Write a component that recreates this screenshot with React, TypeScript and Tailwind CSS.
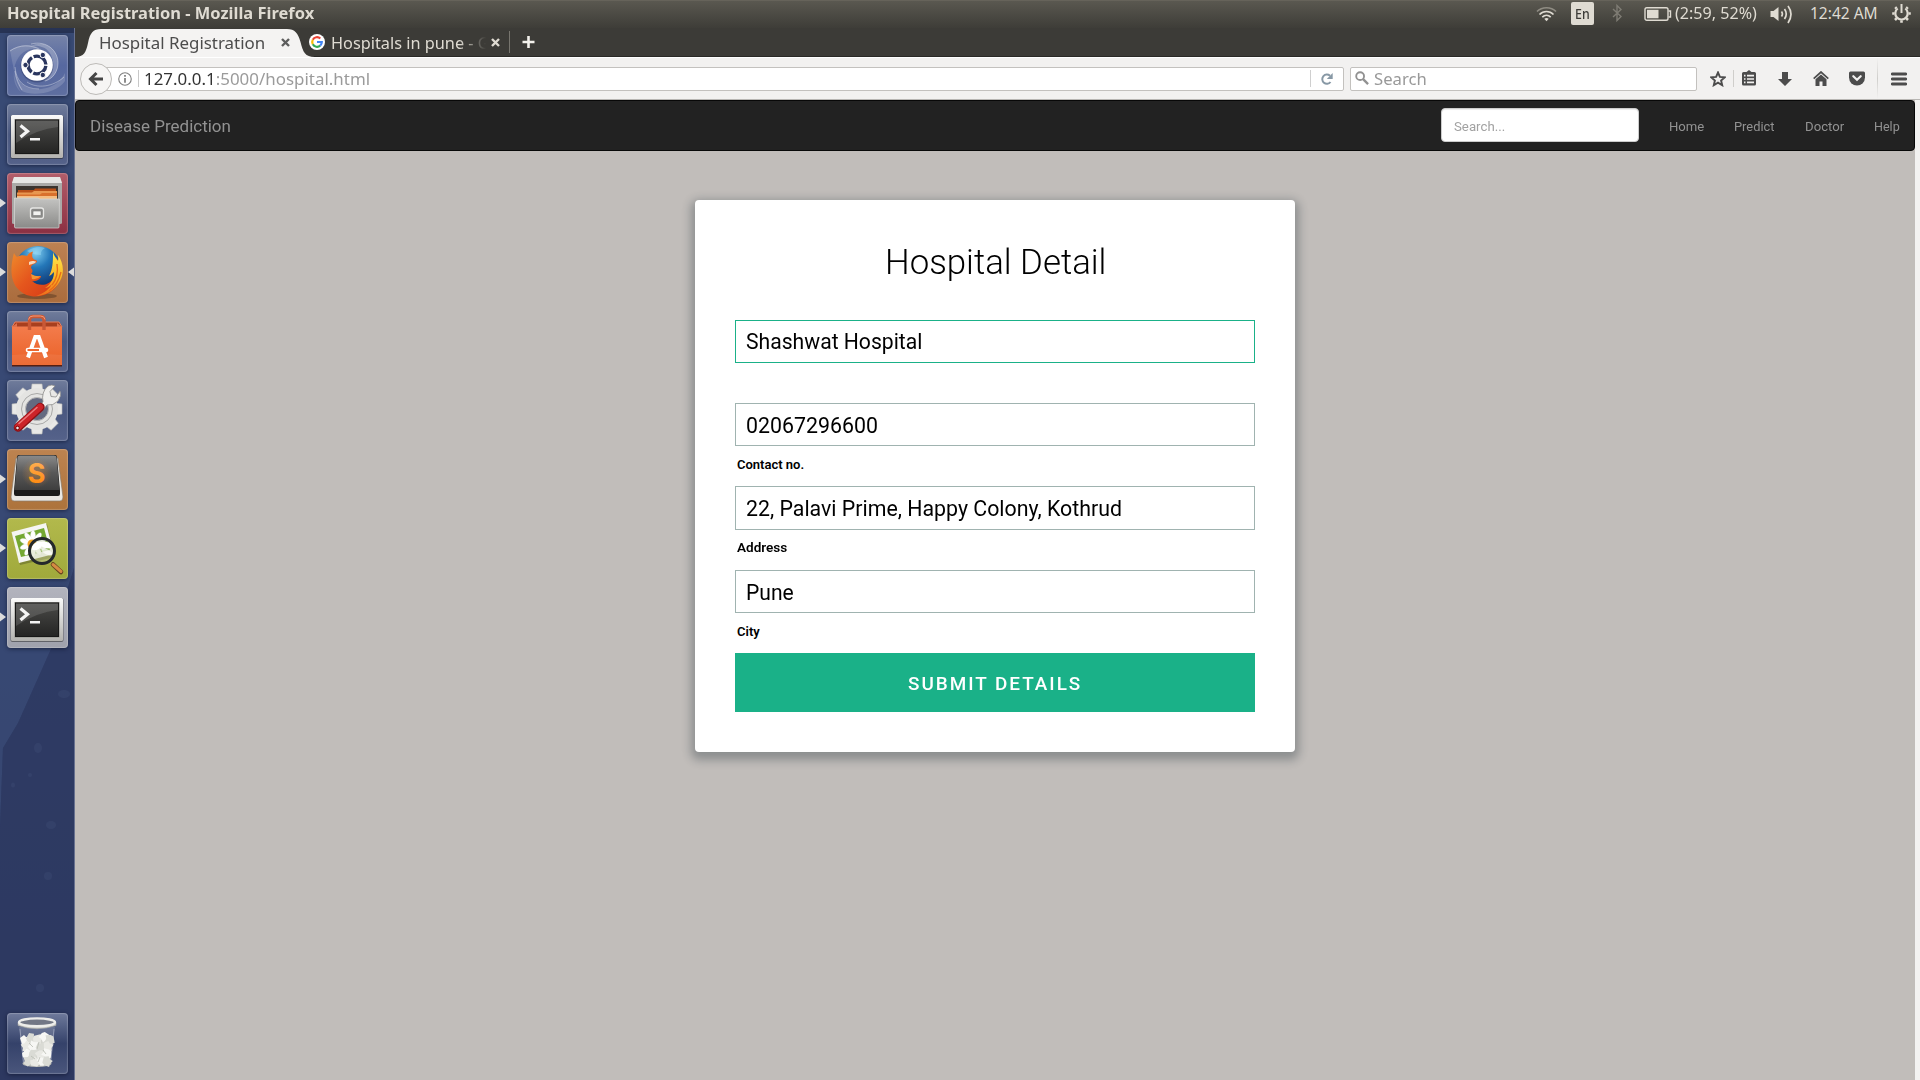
import { useLayoutEffect, useRef, useState, type ReactNode } from "react";

const UI = "font-['Noto_Sans','Open_Sans',sans-serif]";
const WEB = "font-['Roboto','Noto_Sans',sans-serif]";

/** A single line of text stretched or condensed to a known width. */
function Fit({ w, className = "", children }: { w: number; className?: string; children: ReactNode }) {
  const ref = useRef<HTMLSpanElement>(null);
  const [scale, setScale] = useState(1);
  useLayoutEffect(() => {
    if (ref.current) setScale(w / ref.current.offsetWidth);
  }, [w]);
  return (
    <span className={`block shrink-0 whitespace-pre ${className}`} style={{ width: w }}>
      <span ref={ref} className="inline-block origin-left" style={{ transform: `scaleX(${scale})` }}>
        {children}
      </span>
    </span>
  );
}

/* ---------- Top panel ---------- */

function TopPanel() {
  return (
    <header
      className={`flex h-7 shrink-0 items-center border-t border-[#66635a] bg-linear-to-b from-[#5a5850] to-[#3e3d38] pr-2 pb-[3px] pl-[7px] text-[#dfdbd2] ${UI}`}
    >
      <Fit w={307} className="text-[15.500px] leading-6 font-bold">Hospital Registration - Mozilla Firefox</Fit>
      <div className="flex-1" />
      <svg className="mt-0.5 h-[18px] w-[21px]" viewBox="0 0 21 18" fill="none" stroke="#dfdbd2" strokeWidth="1.7">
        <path d="M1 6.5C6 1.5 15 1.5 20 6.5" stroke="#8f8c83" />
        <path d="M3.5 9.5C7.5 5.5 13.500 5.500 17.500 9.500" />
        <path d="M6.300 12.200C8.700 9.900 12.300 9.900 14.700 12.200" />
        <path d="M8.300 13.800Q10.500 12.200 12.700 13.800L10.500 16.200Z" fill="#dfdbd2" stroke="none" />
      </svg>
      <div className="mt-px ml-3.5 flex h-[23px] w-[23px] items-center justify-center rounded-[2px] bg-[#dfdbd2] text-[#3c3b37]">
        <Fit w={15} className="text-[14px] leading-[22px] font-medium">En</Fit>
      </div>
      <svg className="ml-[18px] h-[18px] w-2.5" viewBox="0 0 10 18" fill="none" stroke="#7f7c74" strokeWidth="1.4">
        <path d="M1 5L9 12.500L5 16.500V1.500L9 5.500L1 13" />
      </svg>
      <svg className="mt-px ml-[22px] h-4 w-7" viewBox="0 0 28 16" fill="none" stroke="#dfdbd2" strokeWidth="1.4">
        <rect x="1" y="1.700" width="23" height="12.600" rx="1.800" />
        <path d="M24.500 5H26.500V11H24.500" />
        <rect x="3" y="3.800" width="11.500" height="8.500" fill="#dfdbd2" stroke="none" />
      </svg>
      <Fit w={82} className="ml-[3px] text-[15.500px] leading-6">(2:59, 52%)</Fit>
      <svg className="mt-0.5 ml-[13px] h-5 w-6" viewBox="0 0 24 20" fill="none" stroke="#dfdbd2" strokeWidth="1.700">
        <path d="M0.500 7H3.500L8.500 3V17L3.500 13H0.500Z" fill="#dfdbd2" stroke="none" />
        <path d="M11.500 7.500Q13.300 10 11.500 12.500M14.500 5Q18 10 14.500 15M18 2Q24 10 18 19" />
      </svg>
      <Fit w={68} className="ml-4 text-[15.500px] leading-6">12:42 AM</Fit>
      <svg className="mt-px ml-[13px] h-[21px] w-[21px]" viewBox="0 0 21 21" fill="none" stroke="#dfdbd2">
        <path d="M14.300 5.500A6.200 6.200 0 1 1 6.700 5.500" strokeWidth="2.200" />
        <path d="M10.500 1V10" strokeWidth="2" />
        <path
          d="M4.200 4.200L5.500 5.500M16.800 4.200L15.500 5.500M1.200 10.500H3.500M17.500 10.500H19.800M4 17L5.800 15.200M17 17L15.200 15.200M10.500 17.500V19.800"
          strokeWidth="2.600"
        />
      </svg>
    </header>
  );
}

/* ---------- Launcher ---------- */

function TileSvg({ children }: { children: ReactNode }) {
  return (
    <svg className="block h-[61px] w-[61px]" viewBox="0 0 61 61" fill="none">
      {children}
    </svg>
  );
}

function DashIcon() {
  return (
    <TileSvg>
      <path d="M3 15C14 8 26 9 34 14C22 12 12 17 8 30C6 38 8 48 14 57C8 52 6 44 7 36Z" fill="#fff" opacity=".14" />
      <path d="M8 32C8 46 18 56 34 54C46 53 54 46 58 38L58 46C50 58 26 62 15 56C9 49 7 41 8 32Z" fill="#fff" opacity=".16" />
      <path d="M24 11C38 4 50 14 51 26C52 38 44 46 36 46C46 40 48 30 44 20C40 12 32 10 24 11Z" fill="#fff" opacity=".25" />
      <path d="M3 16C13 9 24 10 32 14M8 32C9 46 17 54 32 54M24 9C40 5 51 16 51 28C51 36 46 44 38 46M15 55C12 50 9 44 8 36M20 47C30 54 46 52 57 42" stroke="#fff" opacity=".35" />
      <circle cx="30" cy="31" r="16.500" fill="#26325c" opacity=".4" />
      <circle cx="30" cy="30" r="15.800" fill="#fff" />
      <circle cx="30" cy="30" r="8.900" stroke="#2a365f" strokeWidth="3.400" strokeDasharray="16.800 1.840" strokeDashoffset="17.700" />
      <g fill="#2a365f" stroke="#fff" strokeWidth="1">
        <circle cx="18.500" cy="30" r="2.700" />
        <circle cx="35.800" cy="20" r="2.700" />
        <circle cx="35.800" cy="40" r="2.700" />
      </g>
    </TileSvg>
  );
}

function TerminalIcon() {
  return (
    <TileSvg>
      <defs>
        <linearGradient id="tf" x1="0" y1="0" x2="0" y2="1">
          <stop stopColor="#fafafa" /><stop offset="1" stopColor="#b3b2af" />
        </linearGradient>
        <linearGradient id="ts" x1="0" y1="0" x2="0" y2="1">
          <stop stopColor="#4a4a48" /><stop offset="1" stopColor="#242423" />
        </linearGradient>
      </defs>
      <rect x="3.500" y="11" width="53" height="44" rx="2" fill="#222" opacity=".5" />
      <rect x="4" y="11" width="52" height="43" rx="1.500" fill="url(#tf)" />
      <rect x="7.500" y="15" width="45" height="35.500" fill="#92918c" />
      <rect x="8.500" y="16" width="43" height="33.500" fill="url(#ts)" stroke="#171717" />
      <path d="M9 16.500H51V23Q30 25 9 39Z" fill="#fff" opacity=".13" />
      <path d="M13.500 21.500L20.500 27.200L13.500 33" stroke="#f4f4f4" strokeWidth="3.200" />
      <path d="M23 35.200H33" stroke="#f4f4f4" strokeWidth="2.600" />
    </TileSvg>
  );
}

function FilesIcon() {
  return (
    <TileSvg>
      <defs>
        <linearGradient id="ff" x1="0" y1="0" x2="0" y2="1">
          <stop stopColor="#c4c4c2" /><stop offset="1" stopColor="#8a8a88" />
        </linearGradient>
      </defs>
      <path d="M7 4H53L55 10V50Q55 51 53 51H7Q5 51 5 50V10Z" fill="#aaa9a7" />
      <path d="M7 4H53L55 10H5Z" fill="#e6e6e4" />
      <rect x="9" y="13" width="42" height="14" fill="#3a342f" />
      <path d="M11 17H27L28 15.500H49V27H11Z" fill="#b84f18" />
      <path d="M10 19.500H25L27 18H50V27H10Z" fill="#e89750" />
      <path d="M10 21.500H33L35 20H50V27H10Z" fill="#d9702c" />
      <path d="M10 23H50V27H10Z" fill="#f5bd82" />
      <path d="M7.500 25H31L33 26H52.500L52 54Q52 55 51 55H9Q7.500 55 7.500 54Z" fill="url(#ff)" stroke="#d9d9d7" strokeWidth=".7" />
      <rect x="23.500" y="35" width="13" height="10.500" rx="2.200" fill="#8b8b89" stroke="#e6e6e4" strokeWidth="1.300" />
      <rect x="26" y="38" width="8" height="4.500" rx=".8" fill="#f2f2f0" stroke="#777" strokeWidth=".6" />
    </TileSvg>
  );
}

function FirefoxIcon() {
  return (
    <TileSvg>
      <defs>
        <radialGradient id="fg" cx=".45" cy=".15" r=".8">
          <stop stopColor="#7fcdf0" /><stop offset=".4" stopColor="#2477b8" /><stop offset="1" stopColor="#0c2b66" />
        </radialGradient>
        <linearGradient id="fx" x1="0" y1="0" x2="1" y2=".8">
          <stop stopColor="#ef8b2c" /><stop offset=".5" stopColor="#e5561d" /><stop offset="1" stopColor="#d63a16" />
        </linearGradient>
        <linearGradient id="fy" x1="0" y1="0" x2="0" y2="1">
          <stop stopColor="#ffe94f" /><stop offset=".6" stopColor="#fbb321" /><stop offset="1" stopColor="#ec6a1c" />
        </linearGradient>
      </defs>
      <ellipse cx="30" cy="54" rx="20" ry="3" fill="#000" opacity=".25" />
      <circle cx="31" cy="27" r="23" fill="url(#fg)" />
      <path d="M20 9Q30 3 38 6Q33 9 34 13Q26 13 20 9Z" fill="#a8e1f7" opacity=".4" />
      <path
        d="M7 11C8 13 9 14 10 15C13 13 17 13 20 14C22 11 24 10 26 9.500C24.500 13 25 16 27 17.500C30 18 31 19 29 21C27 22 24 23 24 26C26 28 26 30 24 32C27 35 31 34 34 34C34 37 29 40 25 39C33 46 45 43 48 33C50 27 51 21 49 15C54 23 57 35 49 45C40 56 22 58 12 48C3 40 3 25 7 11Z"
        fill="url(#fx)"
      />
      <path
        d="M46 10C47 14 49 16 51 19C51.500 16 51 14 51 13C56 20 58 30 53 39C48 49 37 54 29 54C38 51 43 46 45 42C42 45 40 46 38 46C44 42 47 36 47 30C45 32 44 33 42 34C46 27 46 18 46 10Z"
        fill="url(#fy)"
      />
      <path d="M50 22Q52 34 45 43M54 30Q51 43 42 49" stroke="#e76c19" strokeWidth="1.300" />
      <path d="M22 23C26 22 29 21 29 19.500C27 18.500 24 19 22 20Z" fill="#f6d9be" />
      <path d="M24 32Q29 35 34 34Q30 38 25 37" fill="#f29534" />
    </TileSvg>
  );
}

function SoftwareIcon() {
  return (
    <TileSvg>
      <defs>
        <linearGradient id="sg" x1="0" y1="0" x2="0" y2="1">
          <stop stopColor="#f37b4b" /><stop offset="1" stopColor="#ea6127" />
        </linearGradient>
      </defs>
      <path d="M8 11H52L55 16H5Z" fill="#a83f1e" stroke="#e97f5b" />
      <path d="M5 16L10 12V16ZM55 16L50 12V16Z" fill="#e0714b" />
      <rect x="5" y="53" width="50" height="2.500" fill="#541f13" />
      <path d="M5 16H55V54H5Z" fill="url(#sg)" />
      <path d="M22.500 19V9Q22.500 5.500 26 5.500H33.500Q37 5.500 37 9V19" stroke="#c95835" strokeWidth="3.400" />
      <path d="M21.500 8.500Q22 5 26 5H33.500Q37.500 5 38 8.500" stroke="#f19a7b" />
      <path d="M21 46.500L28.300 26H31.700L39 46.500" stroke="#fff" strokeWidth="4" />
      <path d="M21 39H39" stroke="#fff" strokeWidth="4.600" strokeLinecap="round" />
      <path d="M20.500 39H32" stroke="#ec6831" strokeWidth="2" />
      <path d="M5 54V44Q30 42 55 44V54Z" fill="#fff" opacity=".07" />
    </TileSvg>
  );
}

function SettingsIcon() {
  const teeth = [0, 45, 90, 135, 180, 225, 270, 315];
  return (
    <TileSvg>
      <g stroke="#b8b8b6" strokeWidth=".6">
        {teeth.map((a) => (
          <path key={a} d="M24 12L25 4H35L36 12Z" fill="#e9e9e7" transform={`rotate(${a} 30 29)`} />
        ))}
      </g>
      <circle cx="30" cy="29" r="16" stroke="#e4e4e2" strokeWidth="10" />
      <circle cx="30" cy="29" r="15.500" stroke="#a2a2a0" strokeWidth=".9" />
      <circle cx="30" cy="29" r="11.500" fill="#646a80" stroke="#b9b9b7" />
      <path
        d="M36 22Q34 12 41 6Q45 4 48 6L43 11.500L44 16.500L49 17L53 11Q55 15 51 21Q46 26 40 25L36 30L31 26Z"
        fill="#efefed" stroke="#8d8d8b" strokeWidth=".8"
      />
      <path d="M33.500 27L11 47.500" stroke="#8d1116" strokeWidth="8.500" strokeLinecap="round" />
      <path d="M33 27L11 47" stroke="#cc2329" strokeWidth="6.500" strokeLinecap="round" />
      <path d="M30 27.500L12 43.500" stroke="#ec7a7c" strokeWidth="1.500" strokeLinecap="round" />
      <circle cx="10.500" cy="48" r="1.800" fill="#eee" stroke="#700" />
    </TileSvg>
  );
}

function SublimeIcon() {
  return (
    <TileSvg>
      <defs>
        <linearGradient id="sk" x1="0" y1="0" x2="0" y2="1">
          <stop stopColor="#8a8a8a" /><stop offset=".5" stopColor="#585858" /><stop offset="1" stopColor="#3e3e3e" />
        </linearGradient>
        <linearGradient id="so" x1="0" y1="0" x2="0" y2="1">
          <stop stopColor="#ffb862" /><stop offset="1" stopColor="#ff8000" />
        </linearGradient>
        <radialGradient id="sh">
          <stop stopColor="#e8923c" stopOpacity=".45" /><stop offset="1" stopColor="#e8923c" stopOpacity="0" />
        </radialGradient>
      </defs>
      <path d="M9 9H51L56 48Q56 52 53 52H7Q4 52 4 48Z" fill="#e9e7e3" stroke="#8a7b6a" strokeWidth=".7" />
      <path d="M10 8Q10 6 12 6H48Q50 6 50 8L53 42V45Q53 47 51 47H9Q7 47 7 45V42Z" fill="#1c1c1c" />
      <path d="M10.500 8Q11 6.500 13 6.500H47Q49.500 6.500 49.500 8L52.500 41H7.500Z" fill="url(#sk)" />
      <circle cx="29.500" cy="24" r="15" fill="url(#sh)" />
      <text x="29.500" y="33.500" textAnchor="middle" fontFamily="Inter, sans-serif" fontWeight="700" fontSize="27" fill="url(#so)">S</text>
    </TileSvg>
  );
}

function ViewerIcon() {
  const petals = [0, 36, 72, 108, 144, 180, 216, 252, 288, 324];
  return (
    <TileSvg>
      <path d="M5 15L40 6L48 39L13 47Z" fill="#111" opacity=".25" />
      <path d="M4.500 14L39 5L47 36L12 45Z" fill="#f5f5f2" />
      <path d="M8 18L37 10L43 32L14 39Z" fill="#74a832" />
      <g fill="#fff" stroke="#ddd" strokeWidth=".3">
        {petals.map((a) => (
          <ellipse key={a} cx="26" cy="18.500" rx="2.600" ry="6" transform={`rotate(${a} 26 26)`} />
        ))}
      </g>
      <circle cx="25" cy="26" r="4.500" fill="#efa01f" />
      <path d="M46 46.500L54 54" stroke="#68421f" strokeWidth="4.600" strokeLinecap="round" />
      <path d="M46 46.500L54 53.500" stroke="#d58b42" strokeWidth="3" strokeLinecap="round" />
      <circle cx="35" cy="33" r="12.500" fill="#c9d3a9" opacity=".4" />
      <g fill="#fff">
        <ellipse cx="30" cy="28" rx="6" ry="3.500" transform="rotate(-30 30 28)" />
        <ellipse cx="39" cy="27" rx="6" ry="3" transform="rotate(15 39 27)" />
        <ellipse cx="40" cy="34" rx="6" ry="2.600" transform="rotate(25 40 34)" opacity=".7" />
      </g>
      <circle cx="35" cy="33" r="12.500" stroke="#24282b" strokeWidth="3" />
    </TileSvg>
  );
}

function TrashIcon() {
  const paper: [number, number][] = [
    [18, 27], [24, 25], [31, 26], [38, 24], [43, 27], [19, 34], [26, 33], [34, 34], [41, 33],
    [20, 41], [27, 41], [34, 42], [40, 41], [21, 48], [28, 49], [35, 48], [40, 48],
  ];
  return (
    <TileSvg>
      <path d="M12 14L16 50Q30 57 44 50L48 14Z" fill="#fff" opacity=".14" />
      <path d="M13 16L16.500 50M47 16L43.500 50" stroke="#b9c0d3" opacity=".55" />
      <ellipse cx="30" cy="50.500" rx="14.500" ry="3.600" fill="#b9bab5" />
      <path d="M16 26L30 24L45 25L43 50H18Z" fill="#d4d5cf" />
      {paper.map(([x, y], i) => (
        <path
          key={i}
          d="M-5 -2L-1 -5L1 -3L5 -3L4 1L5 4L0 5L-3 4L-4 1Z"
          fill={i % 3 === 0 ? "#f7f7f4" : i % 3 === 1 ? "#dadbd5" : "#e9e9e4"}
          transform={`translate(${x} ${y}) rotate(${i * 47})`}
        />
      ))}
      <path d="M22 30L26 34M32 29L30 36M36 37L39 41M24 43L28 46M33 44L31 49" stroke="#b9bbb3" strokeWidth=".8" />
      <path d="M11 9.500V12.500Q30 19 49 12.500V9.500" fill="#cfcfca" stroke="#a5a6a2" strokeWidth=".6" />
      <ellipse cx="30" cy="9.300" rx="18" ry="3.900" fill="#727785" stroke="#ededea" strokeWidth="2.400" />
    </TileSvg>
  );
}

const NAVY = "bg-linear-to-b from-[#707c9b] via-[#4a5880] to-[#55628a]";
const apps: { name: string; icon: ReactNode; bg: string; left?: boolean; right?: boolean }[] = [
  { name: "Dash", icon: <DashIcon />, bg: "bg-linear-to-b from-[#7683a8] via-[#5668a0] to-[#5f6fa0]" },
  { name: "Terminal", icon: <TerminalIcon />, bg: NAVY },
  { name: "Files", icon: <FilesIcon />, bg: "bg-linear-to-b from-[#b25d6a] to-[#8b2f42]", left: true },
  { name: "Firefox", icon: <FirefoxIcon />, bg: "bg-linear-to-b from-[#bd8152] to-[#aa6c3d]", left: true, right: true },
  { name: "Software", icon: <SoftwareIcon />, bg: NAVY },
  { name: "Settings", icon: <SettingsIcon />, bg: NAVY },
  { name: "Sublime Text", icon: <SublimeIcon />, bg: "bg-linear-to-b from-[#bd8350] to-[#ad733b]", left: true },
  { name: "Image Viewer", icon: <ViewerIcon />, bg: "bg-linear-to-b from-[#b2b94c] to-[#a0a93b]", left: true },
  { name: "Terminal window", icon: <TerminalIcon />, bg: "bg-linear-to-b from-[#b2b3bd] to-[#9fa1ac]", left: true },
];

function Tile({ icon, bg, left, right }: { icon: ReactNode; bg: string; left?: boolean; right?: boolean }) {
  return (
    <div className="relative flex w-full shrink-0 pl-[7px]">
      <div className={`h-[61px] w-[61px] overflow-hidden rounded-[4px] shadow-[0_1px_4px_rgba(10,15,40,0.6),inset_0_0_1px_1px_rgba(255,255,255,0.2)] ${bg}`}>
        {icon}
      </div>
      {left && (
        <svg className="absolute top-6 left-0 h-3 w-1.5" viewBox="0 0 6 12"><path d="M0 1.500L6 6L0 10.500Z" fill="#dcdcdc" /></svg>
      )}
      {right && (
        <svg className="absolute top-6 right-0 h-3 w-1.5" viewBox="0 0 6 12"><path d="M6 1.500L0 6L6 10.500Z" fill="#dcdcdc" /></svg>
      )}
    </div>
  );
}

function Launcher() {
  return (
    <aside className="relative flex w-[75px] shrink-0 flex-col border-r border-[#68718f] bg-linear-to-b from-[#37486f] via-[#34436f] to-[#2c375d] pt-[7px] pb-1.5">
      <svg className="absolute inset-0 h-full w-full" viewBox="0 0 74 1052" fill="none">
        <path d="M0 0H74V540Q58 590 51 621L18 695L3 720L0 800Z" fill="#3a4b76" opacity=".75" />
        <path d="M74 540Q58 590 51 621L18 695L3 720L0 800V1052H74Z" fill="#2d3961" opacity=".75" />
        <g fill="#6f80a8" opacity=".1">
          <ellipse cx="64" cy="666" rx="6" ry="4" />
          <ellipse cx="38" cy="720" rx="4" ry="5" />
          <ellipse cx="51" cy="797" rx="5" ry="4" />
          <ellipse cx="48" cy="848" rx="4" ry="4" />
          <ellipse cx="40" cy="960" rx="4" ry="4" />
          <ellipse cx="13" cy="757" rx="2" ry="2.500" />
          <ellipse cx="30" cy="747" rx="2" ry="2" />
        </g>
        <rect width="74" height="5" fill="#1d2440" opacity=".6" />
      </svg>
      <div className="relative flex flex-1 flex-col gap-2">
        {apps.map((a) => (
          <Tile key={a.name} icon={a.icon} bg={a.bg} left={a.left} right={a.right} />
        ))}
        <div className="flex-1" />
        <Tile icon={<TrashIcon />} bg="bg-linear-to-b from-[#6f7a9b] via-[#35426a] to-[#4a567c]" />
      </div>
    </aside>
  );
}

/* ---------- Browser chrome ---------- */

function CloseGlyph({ color }: { color: string }) {
  return (
    <svg className="h-[9px] w-[9px]" viewBox="0 0 9 9"><path d="M1 1L8 8M8 1L1 8" stroke={color} strokeWidth="2.400" /></svg>
  );
}

function TabStrip() {
  return (
    <div className={`flex h-[29px] shrink-0 items-center border-b border-[#2a2926] bg-[#3c3b37] text-[16.500px] leading-7 ${UI}`}>
      <div className="relative flex h-full w-60 items-center pl-6">
        <svg className="absolute top-0 left-0 h-[29px] w-60" viewBox="0 0 240 29">
          <path d="M0 29C9 29 11 24 13 15C15 5 18 1 26 1H212C220 1 223 5 225.500 14C228 24 230 29 240 29Z" fill="#f4f3f2" />
        </svg>
        <Fit w={166} className="relative pt-0.5 text-[#4c4c4c]">Hospital Registration</Fit>
        <span className="relative ml-4"><CloseGlyph color="#5d5d5d" /></span>
      </div>
      <svg className="-ml-1.5 h-4 w-4" viewBox="0 0 16 16" fill="none" strokeWidth="2.200">
        <circle cx="8" cy="8" r="8" fill="#fff" />
        <path d="M11.300 4.500A4.800 4.800 0 0 0 3.800 5.700" stroke="#ea4335" />
        <path d="M3.800 5.700A4.800 4.800 0 0 0 3.800 10.300" stroke="#fbbc05" />
        <path d="M3.800 10.300A4.800 4.800 0 0 0 11.200 11.600" stroke="#34a853" />
        <path d="M11.200 11.600A4.800 4.800 0 0 0 12.800 8H8" stroke="#4285f4" />
      </svg>
      <div className="ml-1.5 w-[160px] [mask-image:linear-gradient(to_right,#000_80%,transparent_97%)]">
        <Fit w={159} className="pt-0.5 text-[#dfdbd2]">Hospitals in pune - G</Fit>
      </div>
      <span><CloseGlyph color="#dfdbd2" /></span>
      <div className="ml-[9px] h-[22px] w-px bg-[#77756e]" />
      <svg className="ml-3 h-3.5 w-3.5" viewBox="0 0 14 14"><path d="M6.500 1V13M0.500 7H12.500" stroke="#f3f1ec" strokeWidth="2.600" /></svg>
    </div>
  );
}

function Toolbar() {
  return (
    <div className={`flex h-[43px] shrink-0 items-center border-t border-b border-t-white border-b-[#b8b6b3] bg-[#f2f1f0] text-[17px] leading-[22px] ${UI}`}>
      <div className="relative z-10 ml-[5px] flex h-8 w-8 items-center justify-center rounded-full border border-[#bdbbb8] bg-[#f6f5f4]">
        <svg className="h-4 w-4" viewBox="0 0 16 16" fill="none" stroke="#454545" strokeWidth="3"><path d="M15 8H3M8.500 2L2.500 8L8.500 14" /></svg>
      </div>
      <div className="-ml-2.5 flex h-6 w-[1242px] items-center rounded-r-[2px] border border-[#c3c1be] bg-white pl-[15px]">
        <svg className="h-3.5 w-3.5" viewBox="0 0 15 15" fill="none" stroke="#808080">
          <circle cx="7.500" cy="7.500" r="6.700" strokeWidth="1.200" />
          <path d="M7.500 6.500V11.500M7.500 3.300V5.200" strokeWidth="1.900" />
        </svg>
        <div className="ml-1.5 h-[17px] w-px bg-[#c8c8c8]" />
        <Fit w={226} className="ml-[5px] text-[#9b9b9b]"><span className="text-[#333]">127.0.0.1</span>:5000/hospital.html</Fit>
        <div className="flex-1" />
        <div className="h-[17px] w-px bg-[#cfcfcf]" />
        <svg className="mr-2.5 ml-2.5 h-3 w-3" viewBox="0 0 12 12" fill="none">
          <path d="M9.500 9A4.600 4.600 0 1 1 9 2.800" stroke="#8798a5" strokeWidth="2" />
          <path d="M11.700 0V6H5.800Z" fill="#8798a5" />
        </svg>
      </div>
      <div className="ml-1.5 flex h-6 w-[347px] items-center rounded-[2px] border border-[#c3c1be] bg-white pl-1">
        <svg className="-mt-0.5 h-3.5 w-3.5" viewBox="0 0 15 15" fill="none" stroke="#919191">
          <circle cx="5.500" cy="5.500" r="4.200" strokeWidth="2" /><path d="M8.700 8.700L14 14" strokeWidth="2.500" />
        </svg>
        <Fit w={53} className="ml-[5px] text-[#999]">Search</Fit>
      </div>
      <svg className="ml-[13px] h-4 w-4" viewBox="0 0 16 16" fill="none">
        <path d="M8 1.500L9.900 5.900L14.700 6.300L11.100 9.500L12.200 14.200L8 11.700L3.800 14.200L4.900 9.500L1.300 6.300L6.100 5.900Z" stroke="#4c4c4c" strokeWidth="1.900" />
      </svg>
      <div className="ml-[7px] h-[17px] w-px bg-[#cfcecb]" />
      <svg className="-mt-0.5 ml-2 h-4 w-3.5" viewBox="0 0 14 16" fill="none">
        <path d="M4.500 2L7 0L9.500 2H12.500Q14 2 14 3.500V14Q14 15.500 12.500 15.500H1.500Q0 15.500 0 14V3.500Q0 2 1.500 2Z" fill="#4c4c4c" />
        <path d="M2 5.700H3.500M5 5.700H12M2 9H3.500M5 9H12M2 12.300H3.500M5 12.300H12" stroke="#f2f1f0" strokeWidth="1.700" />
      </svg>
      <svg className="ml-[22px] h-3.5 w-3.5" viewBox="0 0 14 14"><path d="M4 0H10V7H14L7 14L0 7H4Z" fill="#4c4c4c" /></svg>
      <svg className="ml-[21px] h-[15px] w-4" viewBox="0 0 16 15" fill="none">
        <path d="M0.700 7.700L8 1L15.300 7.700" stroke="#4c4c4c" strokeWidth="1.700" />
        <path d="M2.500 8.200L8 3.400L13.500 8.200V15H9.500V10.500H6.500V15H2.500Z" fill="#4c4c4c" />
      </svg>
      <svg className="ml-5 h-[15px] w-4" viewBox="0 0 16 15" fill="none">
        <path d="M1.500 0.500H14.500Q16 0.500 16 2V6.500A8 8 0 0 1 0 6.500V2Q0 0.500 1.500 0.500Z" fill="#4c4c4c" />
        <path d="M4.300 5.200L8 8.700L11.700 5.200" stroke="#f2f1f0" strokeWidth="2.200" strokeLinecap="round" />
      </svg>
      <div className="ml-3 h-full w-px bg-linear-to-b from-transparent via-[#cfcecb] to-transparent" />
      <svg className="ml-[13px] h-3.5 w-4" viewBox="0 0 16 14"><path d="M1.300 2H14.700M1.300 7H14.700M1.300 12H14.700" stroke="#4c4c4c" strokeWidth="2.800" strokeLinecap="round" /></svg>
    </div>
  );
}

/* ---------- Web page ---------- */

function SiteNav() {
  return (
    <nav className="flex h-[51px] shrink-0 items-center rounded-[4px] border border-[#080808] bg-[#222] pb-0.5 text-[13.500px] leading-5 text-[#929292]">
      <Fit w={141} className="ml-3.5 pt-1 text-[16.500px]">Disease Prediction</Fit>
      <div className="flex-1" />
      <div className="flex h-[34px] w-[198px] items-center rounded-[4px] border border-[#ccc] bg-white pl-3 text-[#a2a2a2] shadow-[inset_0_1px_1px_rgba(0,0,0,0.075)]">
        <Fit w={51} className="pt-0.5">Search...</Fit>
      </div>
      <Fit w={35} className="ml-[30px] pt-[3px]">Home</Fit>
      <Fit w={41} className="ml-[30px] pt-[3px]">Predict</Fit>
      <Fit w={39} className="ml-[30px] pt-[3px]">Doctor</Fit>
      <Fit w={26} className="mr-3.5 ml-[30px] pt-[3px]">Help</Fit>
    </nav>
  );
}

const fields = [
  { value: "Shashwat Hospital", w: 176, label: "", lw: 0, box: "h-[43px] border-[#1ab188]", pad: "pt-[9px]" },
  { value: "02067296600", w: 132, label: "Contact no.", lw: 67, box: "h-[43px] border-[#a0b3b0] pt-0.5", pad: "pt-[9px]" },
  { value: "22, Palavi Prime, Happy Colony, Kothrud", w: 376, label: "Address", lw: 50, box: "h-11 border-[#a0b3b0]", pad: "pt-2" },
  { value: "Pune", w: 48, label: "City", lw: 23, box: "h-[43px] border-[#a0b3b0] pt-0.5", pad: "pt-[9px]" },
];

function HospitalForm() {
  return (
    <section className="mx-auto mt-[49px] flex h-[552px] w-[600px] flex-col rounded-[4px] bg-white px-10 text-black shadow-[0_4px_10px_4px_rgba(19,35,47,0.3)]">
      <h1 className="flex h-[120px] justify-center pt-[41px] text-[34.500px] leading-[42px] font-light">
        <Fit w={221}>Hospital Detail</Fit>
      </h1>
      {fields.map((f) => (
        <div key={f.value}>
          <div className={`flex items-center border pl-2.5 text-[21.500px] leading-[41px] ${f.box}`}>
            <Fit w={f.w}>{f.value}</Fit>
          </div>
          <div className={`h-10 pl-0.5 text-[13px] leading-5 font-semibold ${f.pad}`}>
            {f.label && <Fit w={f.lw}>{f.label}</Fit>}
          </div>
        </div>
      ))}
      <div className="flex h-[59px] items-center justify-center bg-[#1ab188] text-[19px] leading-8 font-medium tracking-[2px] text-white">
        <Fit w={174} className="pt-0.5">SUBMIT DETAILS</Fit>
      </div>
    </section>
  );
}

export default function App() {
  return (
    <div className="flex h-[1080px] w-[1920px] flex-col overflow-hidden bg-[#3c3b37]">
      <TopPanel />
      <div className="flex min-h-0 flex-1">
        <Launcher />
        <main className="flex min-w-0 flex-1 flex-col">
          <TabStrip />
          <Toolbar />
          <div className={`flex-1 bg-[#f3f2f1] pr-[5px] ${WEB}`}>
            <div className="h-full bg-[#c1bdba]">
              <SiteNav />
              <HospitalForm />
            </div>
          </div>
        </main>
      </div>
    </div>
  );
}
